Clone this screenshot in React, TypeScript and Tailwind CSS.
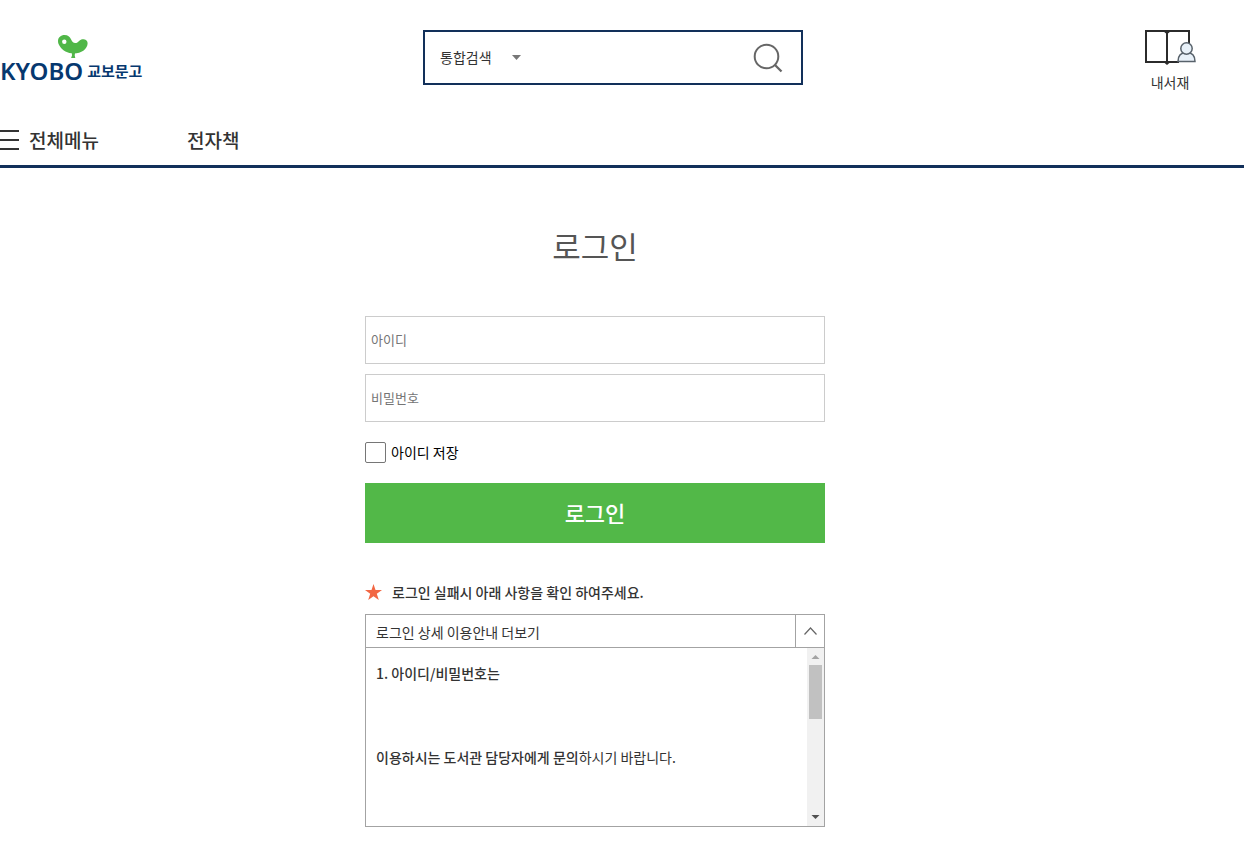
import { useState } from "react";

function Logo() {
  return (
    <a href="#" aria-label="KYOBO 교보문고" className="flex items-end gap-1 leading-none text-[#06386f]">
      <span className="flex flex-col items-end gap-[3px]">
        <svg width="32" height="24" viewBox="0 0 32 24" className="-mr-[6px]" aria-hidden="true">
          <path
            d="M1 7C1 3.500 4 1 7.500 1c3.500 0 5.300 1.800 6.500 4.300 1 2.100 2.200 3.700 4.200 3.700 1.800 0 2.700-1 3.900-2.100 1.300-1.200 2.700-1.900 4.700-1.700 2.600.3 4 2.200 3.800 4.500-.5 5.300-6.300 9.800-13.600 9.800C10.500 19.500 5.500 16.500 3 12.500 1.600 10.300 1 9 1 7Z"
            fill="#50b748"
          />
          <path d="M14.800 19h3.200l-.3 2.500.6 2.500h-4.200l.9-2.500Z" fill="#50b748" />
          <circle cx="7.300" cy="7.800" r="2.200" fill="#fff" />
        </svg>
        <span className="font-['Noto_Sans'] text-2xl leading-5 font-semibold">KYOBO</span>
      </span>
      <span className="text-[15px] leading-5 font-bold">교보문고</span>
    </a>
  );
}

function Header() {
  return (
    <header className="border-b-3 border-[#12305a]">
      <div className="grid h-[115px] grid-cols-[1fr_380px_1fr] items-start pr-[18px]">
        <div className="pt-[34px]">
          <Logo />
        </div>
        <form role="search" className="mt-[30px] flex h-[55px] items-center justify-between border-2 border-[#12305a] pr-[18px] pl-[15px]">
          <div className="flex items-center gap-5">
            <select aria-label="검색 범위" className="appearance-none bg-transparent pb-[2px] text-sm leading-5">
              <option>통합검색</option>
            </select>
            <svg width="9" height="5" viewBox="0 0 9 5" aria-hidden="true">
              <path d="M0 0h9L4.500 5Z" fill="#777" />
            </svg>
          </div>
          <button type="button" aria-label="검색">
            <svg width="30" height="30" viewBox="0 0 30 30" fill="none" stroke="#666" strokeWidth="2" aria-hidden="true">
              <circle cx="13.500" cy="13.500" r="11.800" />
              <path d="m22 22 6.500 6.500" strokeWidth="2.300" />
            </svg>
          </button>
        </form>
        <div className="flex justify-end pt-7 pr-[30px]">
          <a href="#" className="flex flex-col items-center gap-[7px] text-sm leading-5">
            <svg width="52" height="37" viewBox="0 0 52 37" fill="none" aria-hidden="true">
              <path d="M23 34H2V3h18.500l2.500 2 2.500-2H45v15M23 4v31M23 34h12" stroke="#2b2b2b" strokeWidth="2" />
              <path d="M20 33h6v1.500L23 37l-3-2.500Z" fill="#2b2b2b" />
              <path d="M20 2h6l-3 4Z" fill="#2b2b2b" />
              <path d="M34 33.500c0-6 3-9 8.500-9s8.500 3 8.500 9Z" fill="#e8f1f9" stroke="#58626b" strokeWidth="1.500" />
              <circle cx="42.500" cy="20.500" r="5.700" fill="#e8f1f9" stroke="#58626b" strokeWidth="1.500" />
            </svg>
            내서재
          </a>
        </div>
      </div>
      <nav className="flex h-[50px] items-center gap-[88px] text-[19px] font-medium">
        <button type="button" className="flex items-center gap-[10px]">
          <svg width="19" height="20" viewBox="0 0 19 20" stroke="#333" strokeWidth="2" aria-hidden="true">
            <path d="M0 1h19M0 10h19M0 19h19" />
          </svg>
          전체메뉴
        </button>
        <a href="#">전자책</a>
      </nav>
    </header>
  );
}

function Guide() {
  const [open, setOpen] = useState(true);
  return (
    <section className="mt-[39px]">
      <h2 className="flex items-center gap-[10px] text-sm leading-5 font-medium">
        <svg width="17" height="16" viewBox="0 0 17 16" aria-hidden="true">
          <path d="m8.500 0 2 6H17l-5.200 3.800 2 6.200-5.300-3.800L3.200 16l2-6.200L0 6h6.500Z" fill="#f26744" />
        </svg>
        로그인 실패시 아래 사항을 확인 하여주세요.
      </h2>
      <div className="mt-3 border border-[#a3a3a3] text-sm">
        <button
          type="button"
          aria-expanded={open}
          onClick={() => setOpen(!open)}
          className="flex h-8 w-full items-stretch justify-between"
        >
          <span className="pt-[7px] pl-[10px] leading-5">로그인 상세 이용안내 더보기</span>
          <span className="flex w-[29px] items-center justify-center border-l border-[#a3a3a3]">
            <svg width="13" height="8" viewBox="0 0 13 8" fill="none" stroke="#666" aria-hidden="true">
              <path d="m.5 7.500 6-6.500 6 6.500" strokeWidth="1.200" />
            </svg>
          </span>
        </button>
        {open && (
          <div className="flex h-[179px] justify-between border-t border-[#a3a3a3]">
            <div className="flex flex-col gap-16 pt-[15px] pl-[10px] leading-5">
              <p className="font-medium">1. 아이디/비밀번호는</p>
              <p>
                <strong className="font-medium">이용하시는 도서관 담당자에게 문의</strong>하시기 바랍니다.
              </p>
            </div>
            <div aria-hidden="true" className="flex w-[17px] flex-col items-center bg-[#f1f1f1]">
              <svg width="17" height="17" viewBox="0 0 17 17">
                <path d="M4.500 11h8l-4-4Z" fill="#a3a3a3" />
              </svg>
              <div className="h-[54px] w-[13px] bg-[#c1c1c1]" />
              <svg width="17" height="17" viewBox="0 0 17 17" className="mt-auto">
                <path d="M4.500 6h8l-4 4Z" fill="#505050" />
              </svg>
            </div>
          </div>
        )}
      </div>
    </section>
  );
}

export default function App() {
  const field =
    "h-12 w-full border border-[#ccc] px-[5px] pb-[2px] text-[13px] outline-none placeholder:text-[#757575] focus:border-[#12305a]";
  return (
    <div className="bg-white pb-7 font-['Noto_Sans_CJK_KR',sans-serif] text-[#333]">
      <Header />
      <main className="pt-[54px] pr-[54px]">
        <div className="mx-auto max-w-[460px]">
          <h1 className="text-center text-[31px] leading-12 text-[#555]">로그인</h1>
          <form className="mt-[46px]" onSubmit={(e) => e.preventDefault()}>
            <div className="flex flex-col gap-[10px]">
              <input aria-label="아이디" type="text" placeholder="아이디" className={field} />
              <input aria-label="비밀번호" type="password" placeholder="비밀번호" className={field} />
            </div>
            <label className="mt-5 flex items-center gap-[5px] text-sm leading-[21px] text-black">
              <input
                type="checkbox"
                className="size-[21px] appearance-none rounded-xs border border-[#767676] checked:bg-[#52b848]"
              />
              아이디 저장
            </label>
            <button type="submit" className="mt-5 h-[60px] w-full bg-[#52b848] pb-[2px] text-[22px] font-medium text-white">
              로그인
            </button>
          </form>
          <Guide />
        </div>
      </main>
    </div>
  );
}
